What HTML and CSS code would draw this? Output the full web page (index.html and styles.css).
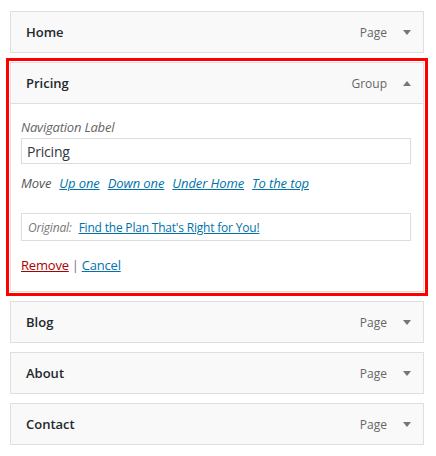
FILE: index.html
```html
<!DOCTYPE html>
<html lang="en">
<head>
<meta charset="utf-8">
<title>Menu structure</title>
<link rel="stylesheet" href="styles.css">
</head>
<body>
<ul class="menu">
  <li class="item">
    <div class="bar"><span class="title">Home</span><span class="type">Page</span><span class="arrow"></span></div>
  </li>
  <li class="item item-open">
    <div class="bar"><span class="title">Pricing</span><span class="type">Group</span><span class="arrow arrow-up"></span></div>
    <div class="settings">
      <label class="field-label" for="nav-label">Navigation Label</label>
      <input class="field-input" id="nav-label" type="text" value="Pricing">
      <div class="move"><span class="move-label">Move</span><a href="#">Up one</a><a href="#">Down one</a><a href="#">Under Home</a><a href="#">To the top</a></div>
      <div class="original"><span class="original-label">Original:</span><a href="#">Find the Plan That's Right for You!</a></div>
      <div class="actions"><a class="remove" href="#">Remove</a><span class="sep">|</span><a class="cancel" href="#">Cancel</a></div>
    </div>
  </li>
  <li class="item">
    <div class="bar"><span class="title">Blog</span><span class="type">Page</span><span class="arrow"></span></div>
  </li>
  <li class="item">
    <div class="bar"><span class="title">About</span><span class="type">Page</span><span class="arrow"></span></div>
  </li>
  <li class="item">
    <div class="bar"><span class="title">Contact</span><span class="type">Page</span><span class="arrow"></span></div>
  </li>
</ul>
</body>
</html>
```
FILE: styles.css
```css
* { box-sizing: border-box; }
html, body { margin: 0; padding: 0; background: #fff; }
body {
  font-family: "Open Sans", "Noto Sans", sans-serif;
  font-size: 13px;
  color: #23282d;
}
.menu {
  list-style: none;
  margin: 0;
  padding: 11px 12px 0 10px;
  width: 436px;
  display: flex;
  flex-direction: column;
  gap: 9px;
}
.item {
  border: 1px solid #dfdfdf;
  background: #fff;
}
.item-open {
  outline: 3px solid #ff0000;
  outline-offset: 1px;
}
.bar {
  height: 40px;
  background: #f9f9f9;
  display: flex;
  align-items: center;
  padding: 0 12px 0 15px;
}
.item-open .bar { border-bottom: 1px solid #dfdfdf; height: 41px; }
.title {
  flex: 1;
  font-weight: 600;
  font-size: 13px;
  color: #23282d;
}
.type {
  color: #666;
  font-size: 12px;
  margin-right: 16px;
}
.arrow {
  width: 0; height: 0;
  border-left: 4px solid transparent;
  border-right: 4px solid transparent;
  border-top: 5px solid #72777c;
}
.arrow-up {
  border-top: 0;
  border-bottom: 5px solid #72777c;
}
.settings {
  padding: 14px 12px 17px 10px;
  display: flex;
  flex-direction: column;
  letter-spacing: -0.2px;
}
.field-label {
  font-style: italic;
  color: #666;
  line-height: 18px;
}
.field-input {
  margin-top: 2px;
  height: 26px;
  border: 1px solid #ddd;
  padding: 0 5px;
  font: inherit;
  font-size: 14px;
  letter-spacing: -0.2px;
  color: #32373c;
  outline: none;
}
.move {
  margin-top: 10px;
  line-height: 18px;
  font-style: italic;
  color: #555;
  display: flex;
  gap: 8px;
  letter-spacing: -0.1px;
}
.move a, .original a, .cancel { color: #0073aa; text-decoration: underline; }
.original {
  margin-top: 21px;
  height: 28px;
  border: 1px solid #ddd;
  display: flex;
  align-items: center;
  padding: 0 6px;
  gap: 7px;
  font-size: 12px;
}
.original-label { font-style: italic; color: #777; }
.actions {
  margin-top: 15px;
  line-height: 18px;
  display: flex;
  gap: 3px;
  color: #777;
}
.remove { color: #a00; text-decoration: underline; }
```
